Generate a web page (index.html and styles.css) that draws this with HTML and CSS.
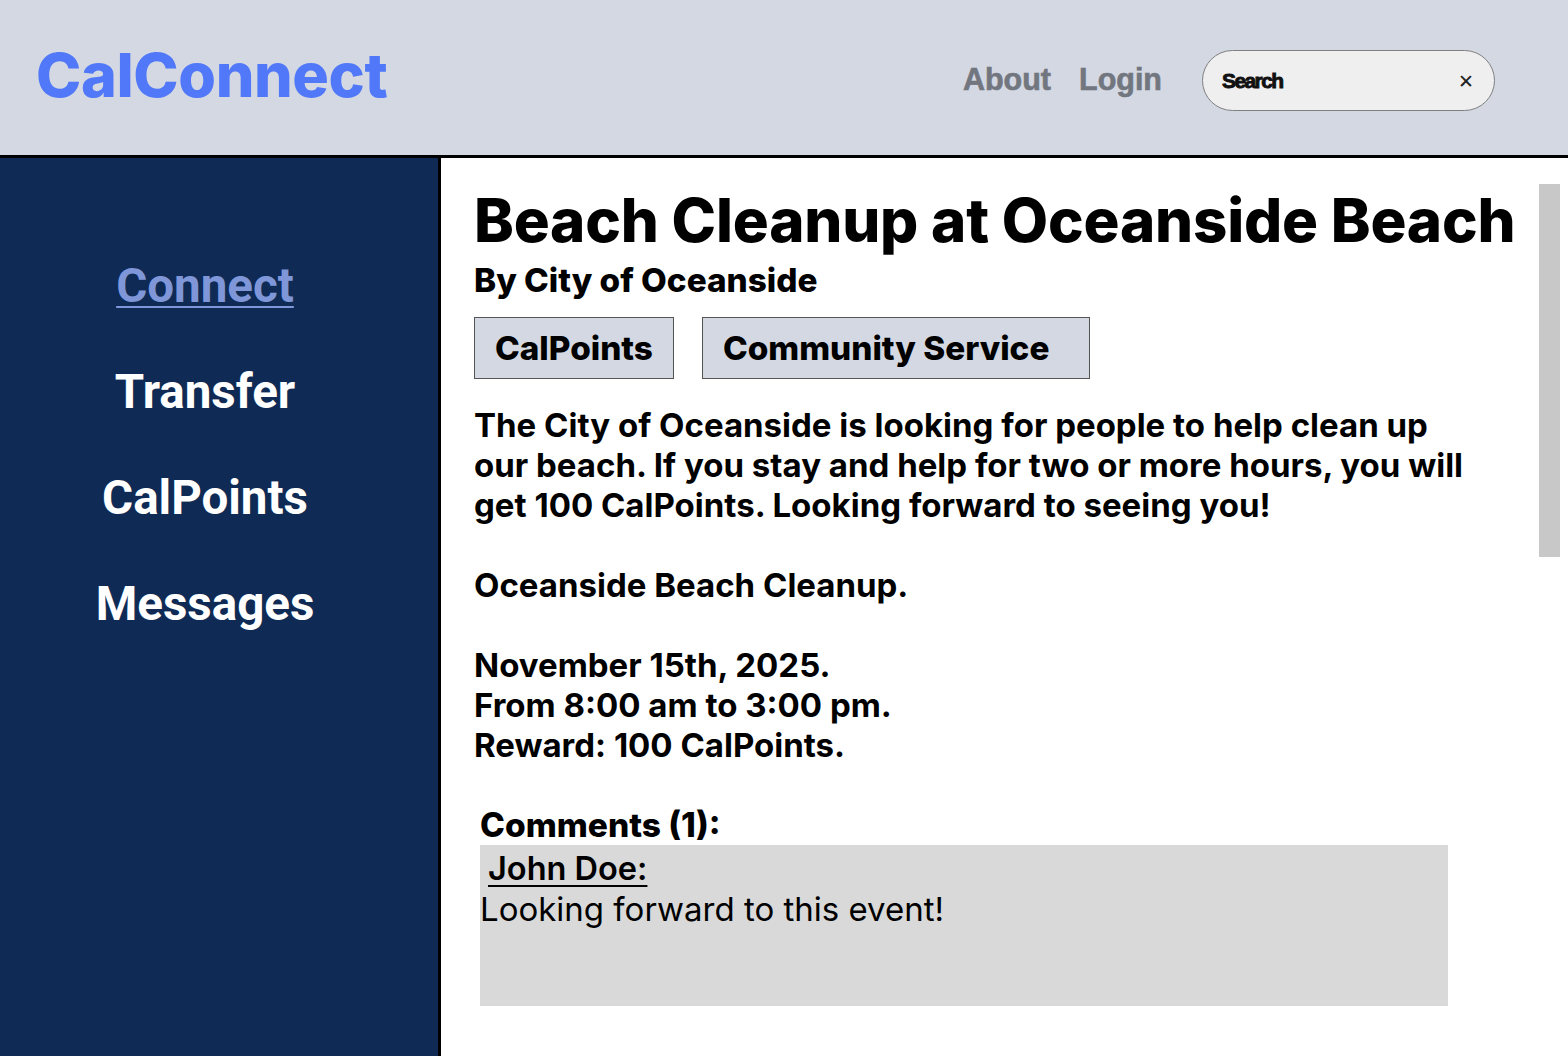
FILE: index.html
```html
<!DOCTYPE html>
<html lang="en">
<head>
<meta charset="utf-8">
<title>CalConnect</title>
<link rel="stylesheet" href="styles.css">
</head>
<body>
<header class="topbar">
  <div class="logo">CalConnect</div>
  <nav class="toplinks">
    <a class="toplink" href="#">About</a>
    <a class="toplink" href="#">Login</a>
  </nav>
  <div class="search">
    <span class="search-text">Search</span>
    <span class="search-clear">&#x2715;</span>
  </div>
</header>
<div class="layout">
  <aside class="sidebar">
    <a class="side-link active" href="#">Connect</a>
    <a class="side-link" href="#">Transfer</a>
    <a class="side-link" href="#">CalPoints</a>
    <a class="side-link" href="#">Messages</a>
  </aside>
  <main class="content">
    <div class="scroll-thumb"></div>
    <h1 class="title">Beach Cleanup at Oceanside Beach</h1>
    <h2 class="byline">By City of Oceanside</h2>
    <div class="tags">
      <span class="tag">CalPoints</span>
      <span class="tag tag-wide">Community Service</span>
    </div>
    <p class="desc">The City of Oceanside is looking for people to help clean up<br>our beach. If you stay and help for two or more hours, you will<br>get 100 CalPoints. Looking forward to seeing you!<br><br>Oceanside Beach Cleanup.<br><br>November 15th, 2025.<br>From 8:00 am to 3:00 pm.<br>Reward: 100 CalPoints.</p>
    <section class="comments">
      <h3 class="comments-title">Comments (1):</h3>
      <div class="comment">
        <a class="comment-author" href="#">John Doe:</a>
        <p class="comment-body">Looking forward to this event!</p>
      </div>
    </section>
  </main>
</div>
</body>
</html>
```
FILE: styles.css
```css
* { box-sizing: border-box; }
html, body { margin: 0; padding: 0; }
body {
  font-family: Inter, "Noto Sans", sans-serif;
  color: #000;
  background: #fff;
  width: 1568px;
  height: 1056px;
  overflow: hidden;
}
.topbar {
  height: 158px;
  background: #d3d8e3;
  border-bottom: 3px solid #000;
  display: flex;
  align-items: center;
  padding: 0 0 0 36px;
}
.logo {
  font-family: Inter, sans-serif;
  font-weight: 800;
  font-size: 61px;
  color: #5078f8;
  letter-spacing: -0.4px;
  margin-top: -6px;
}
.toplinks {
  margin-left: auto;
  display: flex;
  gap: 28px;
  margin-top: 4px;
}
.toplink {
  font-family: "Liberation Sans", Arial, sans-serif;
  font-weight: 700;
  font-size: 30.5px;
  color: #72767f;
  text-decoration: none;
  -webkit-text-stroke: 0.6px #72767f;
}
.search {
  margin-left: 40px;
  margin-right: 73px;
  width: 293px;
  height: 61px;
  margin-top: 6px;
  border: 1px solid #808080;
  border-radius: 31px;
  background: #efefef;
  display: flex;
  align-items: center;
  padding: 0 20px 0 19px;
}
.search-text {
  font-family: "Liberation Sans", Arial, sans-serif;
  font-weight: 700;
  font-size: 21px;
  letter-spacing: -1.6px;
  color: #111;
  -webkit-text-stroke: 0.9px #111;
}
.search-clear {
  margin-left: auto;
  font-family: "DejaVu Sans", sans-serif;
  font-size: 19px;
  color: #222;
}
.layout {
  display: flex;
  height: 898px;
}
.sidebar {
  width: 441px;
  flex: none;
  background: #0f2b55;
  border-right: 3px solid #000;
  display: flex;
  flex-direction: column;
  align-items: center;
  padding: 102px 28px 0 0;
  gap: 54px;
}
.side-link {
  font-family: Roboto, sans-serif;
  font-weight: 700;
  font-size: 47.5px;
  line-height: 52px;
  color: #fff;
  text-decoration: none;
}
.side-link.active {
  color: #7f97d8;
  text-decoration: underline;
  text-decoration-thickness: 2px;
  text-underline-offset: 4px;
}
.content {
  position: relative;
  flex: 1;
  padding: 24px 0 0 33px;
}
.scroll-thumb {
  position: absolute;
  left: 1098px;
  top: 26px;
  width: 21px;
  height: 373px;
  background: #c8c8c8;
}
.title {
  margin: 0;
  font-weight: 800;
  font-size: 60px;
  line-height: 76px;
  letter-spacing: -0.2px;
}
.byline {
  margin: 0;
  font-weight: 800;
  font-size: 33.3px;
  line-height: 44px;
}
.tags {
  display: flex;
  gap: 28px;
  margin-top: 15px;
}
.tag {
  height: 62px;
  display: flex;
  align-items: center;
  padding: 0 20px;
  background: #d3d8e3;
  border: 1px solid #555;
  font-weight: 800;
  font-size: 33.3px;
}
.tag-wide { padding-right: 40px; }
.desc {
  margin: 26px 0 0;
  font-weight: 700;
  font-size: 33px;
  line-height: 40px;
}
.comments {
  margin: 40px 0 0 6px;
  width: 968px;
}
.comments-title {
  margin: 0;
  font-weight: 800;
  font-size: 33.5px;
  line-height: 40px;
}
.comment {
  background: #d9d9d9;
  height: 161px;
  padding: 4px 0 0 0;
}
.comment-author {
  display: inline-block;
  margin-left: 8px;
  font-weight: 600;
  font-size: 32.5px;
  line-height: 40px;
  color: #000;
  text-decoration: underline;
  text-decoration-thickness: 2px;
  text-underline-offset: 5px;
}
.comment-body {
  margin: 0;
  font-weight: 400;
  font-size: 33px;
  line-height: 40px;
}
```
